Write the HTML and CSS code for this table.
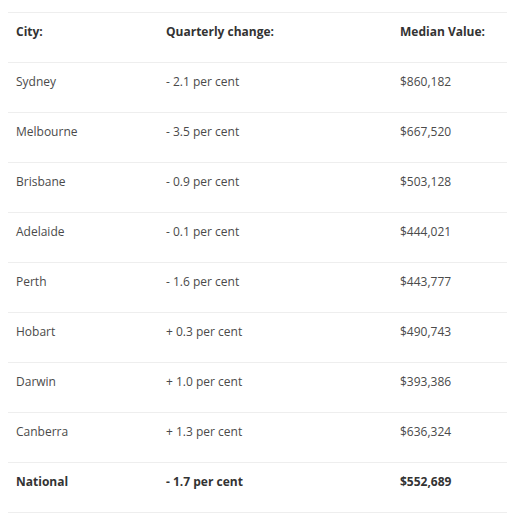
FILE: index.html
```html
<!DOCTYPE html>
<html>
<head>
<meta charset="utf-8">
<link rel="stylesheet" href="styles.css">
</head>
<body>
<div class="wrap">
<table class="tbl">
<thead>
<tr><th class="c1">City:</th><th class="c2">Quarterly change:</th><th class="c3">Median Value:</th></tr>
</thead>
<tbody>
<tr><td>Sydney</td><td>- 2.1 per cent</td><td>$860,182</td></tr>
<tr><td>Melbourne</td><td>- 3.5 per cent</td><td>$667,520</td></tr>
<tr><td>Brisbane</td><td>- 0.9 per cent</td><td>$503,128</td></tr>
<tr><td>Adelaide</td><td>- 0.1 per cent</td><td>$444,021</td></tr>
<tr><td>Perth</td><td>- 1.6 per cent</td><td>$443,777</td></tr>
<tr><td>Hobart</td><td>+ 0.3 per cent</td><td>$490,743</td></tr>
<tr><td>Darwin</td><td>+ 1.0 per cent</td><td>$393,386</td></tr>
<tr><td>Canberra</td><td>+ 1.3 per cent</td><td>$636,324</td></tr>
<tr class="total"><td>National</td><td>- 1.7 per cent</td><td>$552,689</td></tr>
</tbody>
</table>
</div>
</body>
</html>
```
FILE: styles.css
```css
html, body { margin: 0; padding: 0; background: #fff; }
.wrap { padding: 12px 0 0 8px; }
.tbl {
  width: 499px;
  border-collapse: collapse;
  font-family: "Open Sans", "Liberation Sans", sans-serif;
  font-size: 12px;
  line-height: 18px;
  color: #4a4a4a;
}
.tbl th, .tbl td {
  border-top: 1px solid #eeeeee;
  border-bottom: 1px solid #eeeeee;
  height: 39px;
  padding: 10px 0 0 8px;
  text-align: left;
  vertical-align: top;
  box-sizing: content-box;
}
.tbl th { font-weight: 700; color: #333; }
.c1 { width: 142px; }
.c2 { width: 226px; }
.total td { font-weight: 700; color: #333; }
```
